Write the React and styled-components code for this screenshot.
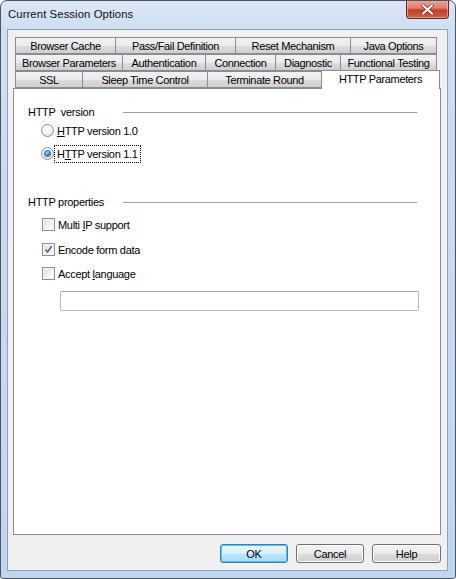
import React from "react";
import styled, { createGlobalStyle } from "styled-components";

const GlobalStyle = createGlobalStyle`
  html, body {
    margin: 0;
    padding: 0;
    background: #ffffff;
  }
  body {
    font-family: "Liberation Sans", Arial, sans-serif;
    font-size: 11px;
    color: #000;
  }
`;

const tabRows = [
  [
    { label: "Browser Cache", width: 100 },
    { label: "Pass/Fail Definition", width: 120 },
    { label: "Reset Mechanism", width: 115 },
    { label: "Java Options", width: 87 },
  ],
  [
    { label: "Browser Parameters", width: 107 },
    { label: "Authentication", width: 83 },
    { label: "Connection", width: 70 },
    { label: "Diagnostic", width: 65 },
    { label: "Functional Testing", width: 97 },
  ],
  [
    { label: "SSL", width: 67 },
    { label: "Sleep Time Control", width: 125 },
    { label: "Terminate Round", width: 114 },
    { label: "HTTP Parameters", width: 119, active: true },
  ],
];

const Window = styled.div`
  width: 456px;
  height: 579px;
  box-sizing: border-box;
  border: 1px solid #4b5561;
  border-radius: 7px 7px 3px 3px;
  background: linear-gradient(180deg, #dbe7f5 0px, #cfdff2 28px, #c0d5ee 100%);
  display: flex;
  flex-direction: column;
  overflow: hidden;
`;

const TitleBar = styled.div`
  height: 28px;
  display: flex;
  align-items: flex-start;
  justify-content: space-between;
`;

const Title = styled.div`
  padding: 7px 0 0 7px;
  font-size: 11.3px;
  color: #111;
  letter-spacing: 0.1px;
`;

const CloseButton = styled.div`
  width: 43px;
  height: 19px;
  margin-right: 6px;
  margin-top: -1px;
  box-sizing: border-box;
  border: 1px solid #6d2319;
  border-top: none;
  border-radius: 0 0 4px 4px;
  background: linear-gradient(180deg, #e9a99b 0%, #dc7f6a 45%, #c2402a 55%, #cf5f46 100%);
  box-shadow: inset 0 0 0 1px rgba(255, 210, 200, 0.5);
  display: flex;
  align-items: center;
  justify-content: center;
`;

const Client = styled.div`
  flex: 1;
  margin: 0 7px 7px 6px;
  border: 1px solid #8fa3bb;
  background: #f0f0f0;
  padding: 7px 6px 0 5px;
  display: flex;
  flex-direction: column;
`;

const TabArea = styled.div`
  display: flex;
  flex-direction: column;
  padding-left: 2px;
`;

const TabRow = styled.div`
  display: flex;
  height: 17px;
  align-items: flex-end;
`;

const Tab = styled.div`
  width: ${(p) => p.$w}px;
  height: ${(p) => (p.$active ? 19 : 17)}px;
  box-sizing: border-box;
  border: 1px solid #898c95;
  border-right-width: ${(p) => (p.$active ? 1 : 0)}px;
  border-bottom: ${(p) => (p.$active ? "none" : "1px solid #898c95")};
  margin-top: ${(p) => (p.$active ? -2 : 0)}px;
  margin-bottom: ${(p) => (p.$active ? -1 : 0)}px;
  position: relative;
  z-index: ${(p) => (p.$active ? 2 : 1)};
  background: ${(p) =>
    p.$active
      ? "#ffffff"
      : "linear-gradient(180deg, #f2f2f2 0%, #ebebeb 50%, #dddddd 51%, #cfcfcf 100%)"};
  display: flex;
  justify-content: center;
  align-items: ${(p) => (p.$active ? "flex-start" : "center")};
  padding-top: ${(p) => (p.$active ? 2 : 0)}px;
  font-size: 11px;
  letter-spacing: -0.35px;
  white-space: nowrap;
  &:last-child {
    border-right-width: 1px;
  }
`;

const Panel = styled.div`
  height: 447px;
  box-sizing: border-box;
  border: 1px solid #898c95;
  background: #ffffff;
  padding: 16px 23px 0 14px;
  display: flex;
  flex-direction: column;
`;

const Group = styled.div`
  display: flex;
  flex-direction: column;
  margin-bottom: ${(p) => p.$gap || 0}px;
`;

const GroupHeader = styled.div`
  display: flex;
  align-items: center;
  height: 14px;
  letter-spacing: -0.3px;
`;

const GroupTitle = styled.span`
  width: 95px;
  flex: none;
  white-space: pre;
`;

const Rule = styled.div`
  flex: 1;
  height: 1px;
  background: #a0a0a0;
`;

const OptionRow = styled.div`
  display: flex;
  align-items: center;
  height: 13px;
  margin-top: ${(p) => p.$top}px;
  padding-left: ${(p) => p.$indent}px;
  gap: 2px;
  letter-spacing: -0.3px;
`;

const RadioCircle = styled.div`
  width: 13px;
  height: 13px;
  box-sizing: border-box;
  border-radius: 50%;
  border: 1px solid #8e8f8f;
  background: radial-gradient(circle at 40% 35%, #ffffff 0%, #f4f4f4 45%, #d6d6d6 100%);
  display: flex;
  align-items: center;
  justify-content: center;
`;

const RadioDot = styled.div`
  width: 5px;
  height: 5px;
  border-radius: 50%;
  background: radial-gradient(circle at 40% 35%, #9cd8ff 0%, #2a85d0 55%, #0f4f93 100%);
  box-shadow: 0 0 0 1px #3b76ac;
`;

const CheckBox = styled.div`
  width: 13px;
  height: 13px;
  box-sizing: border-box;
  border: 1px solid #8e8f8f;
  background: linear-gradient(135deg, #dedede 0%, #f4f4f4 60%, #ffffff 100%);
  box-shadow: inset 0 0 0 1px #f4f4f4;
  display: flex;
  align-items: center;
  justify-content: center;
`;

const Label = styled.span`
  padding: 1px 1px;
  outline: ${(p) => (p.$focused ? "1px dotted #000" : "none")};
  outline-offset: 1px;
  white-space: nowrap;
`;

const Key = styled.span`
  text-decoration: underline;
`;

const TextInput = styled.div`
  margin: 11px 0 0 32px;
  width: 359px;
  height: 20px;
  box-sizing: border-box;
  border: 1px solid #b8b8b8;
  border-top-color: #a6a6a6;
  border-radius: 2px;
  background: #ffffff;
`;

const ButtonBar = styled.div`
  display: flex;
  justify-content: flex-end;
  gap: 8px;
  margin-top: 9px;
`;

const Button = styled.div`
  width: ${(p) => p.$w}px;
  height: 19px;
  box-sizing: border-box;
  border: 1px solid ${(p) => (p.$default ? "#3c7fb1" : "#707070")};
  border-radius: 3px;
  background: ${(p) =>
    p.$default
      ? "linear-gradient(180deg, #eaf6fd 0%, #d9f0fc 50%, #bee6fd 51%, #a7d9f5 100%)"
      : "linear-gradient(180deg, #f2f2f2 0%, #ebebeb 50%, #dddddd 51%, #cfcfcf 100%)"};
  box-shadow: inset 0 0 0 1px ${(p) => (p.$default ? "#48c4f8" : "#fcfcfc")};
  display: flex;
  align-items: center;
  justify-content: center;
  letter-spacing: -0.3px;
`;

const CheckMark = () => (
  <svg width="9" height="9" viewBox="0 0 9 9">
    <path d="M1.5 4.5 L3.6 7 L7.6 1.2" fill="none" stroke="#4c61a0" strokeWidth="1.6" />
  </svg>
);

const CloseGlyph = () => (
  <svg width="13" height="11" viewBox="0 0 13 11">
    <path
      d="M2 1.5 L11 9.5 M11 1.5 L2 9.5"
      stroke="#6b2a22"
      strokeWidth="3.4"
      strokeLinecap="square"
      fill="none"
    />
    <path
      d="M2 1.5 L11 9.5 M11 1.5 L2 9.5"
      stroke="#ffffff"
      strokeWidth="2"
      strokeLinecap="square"
      fill="none"
    />
  </svg>
);

const Radio = ({ checked }) => (
  <RadioCircle>{checked && <RadioDot />}</RadioCircle>
);

const Check = ({ checked }) => <CheckBox>{checked && <CheckMark />}</CheckBox>;

export default function App() {
  return (
    <>
      <GlobalStyle />
      <Window>
        <TitleBar>
          <Title>Current Session Options</Title>
          <CloseButton>
            <CloseGlyph />
          </CloseButton>
        </TitleBar>
        <Client>
          <TabArea>
            {tabRows.map((row, i) => (
              <TabRow key={i}>
                {row.map((tab) => (
                  <Tab key={tab.label} $w={tab.width} $active={tab.active}>
                    {tab.label}
                  </Tab>
                ))}
              </TabRow>
            ))}
          </TabArea>
          <Panel>
            <Group $gap={35}>
              <GroupHeader>
                <GroupTitle>{"HTTP  version"}</GroupTitle>
                <Rule />
              </GroupHeader>
              <OptionRow $top={5} $indent={13}>
                <Radio />
                <Label>
                  <Key>H</Key>TTP version 1.0
                </Label>
              </OptionRow>
              <OptionRow $top={10} $indent={13}>
                <Radio checked />
                <Label $focused>
                  H<Key>T</Key>TP version 1.1
                </Label>
              </OptionRow>
            </Group>
            <Group>
              <GroupHeader>
                <GroupTitle>HTTP properties</GroupTitle>
                <Rule />
              </GroupHeader>
              <OptionRow $top={9} $indent={14}>
                <Check />
                <Label>
                  Multi <Key>I</Key>P support
                </Label>
              </OptionRow>
              <OptionRow $top={12} $indent={14}>
                <Check checked />
                <Label>Encode form data</Label>
              </OptionRow>
              <OptionRow $top={11} $indent={14}>
                <Check />
                <Label>
                  Accept <Key>l</Key>anguage
                </Label>
              </OptionRow>
              <TextInput />
            </Group>
          </Panel>
          <ButtonBar>
            <Button $w={68} $default>
              OK
            </Button>
            <Button $w={68}>Cancel</Button>
            <Button $w={69}>Help</Button>
          </ButtonBar>
        </Client>
      </Window>
    </>
  );
}
